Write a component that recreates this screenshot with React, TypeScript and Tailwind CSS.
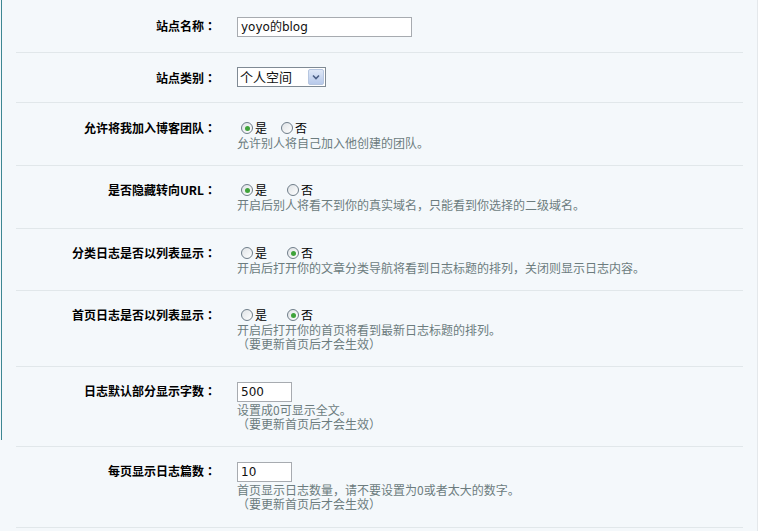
import type { ReactNode } from 'react';

const cjk = "font-['Noto_Sans_CJK_SC','Noto_Sans',sans-serif]";

type Option = { label: string; checked: boolean };

const Radio = ({ checked }: { checked: boolean }) => (
  <span className="relative inline-flex h-[12px] w-[12px] shrink-0 items-center justify-center rounded-full border border-[#6f7d89] bg-gradient-to-br from-[#dfe3e6] to-white">
    {checked && <span className="h-[5px] w-[5px] rounded-full bg-[#3fa33a]" />}
  </span>
);

const RadioGroup = ({ options, gap }: { options: Option[]; gap: string }) => (
  <div className={`flex h-[16px] items-center pl-[4px] ${gap}`}>
    {options.map((o) => (
      <label key={o.label} className="flex items-center gap-[2px] text-[12px] leading-[16px] text-black">
        <Radio checked={o.checked} />
        <span>{o.label}</span>
      </label>
    ))}
  </div>
);

const Hint = ({ children }: { children: ReactNode }) => (
  <p className="text-[12px] leading-[14px] text-[#6c7c7e]">{children}</p>
);

const TextBox = ({ value, width }: { value: string; width: string }) => (
  <div
    className={`flex h-[20px] ${width} items-center border border-[#a7abb0] bg-white pl-[3px] text-[12px] text-[#111] font-['DejaVu_Sans','Noto_Sans_CJK_SC',sans-serif]`}
  >
    {value}
  </div>
);

const Row = ({
  label,
  labelLeading,
  height,
  pt,
  children,
}: {
  label: string;
  labelLeading: string;
  height: string;
  pt: string;
  children: ReactNode;
}) => (
  <div className={`flex ${height} ${pt} border-b border-[#e1e7ea]`}>
    <div className={`w-[200px] shrink-0 text-right text-[12px] font-bold text-black ${labelLeading}`}>
      {label}
      {/* the TC face centres the full-width colon in its cell */}
      <span className="font-['Noto_Sans_CJK_TC',sans-serif]">：</span>
    </div>
    <div className="pl-[21px]">{children}</div>
  </div>
);

const yesNo = (yes: boolean): Option[] => [
  { label: '是', checked: yes },
  { label: '否', checked: !yes },
];

export default function App() {
  return (
    <div className={`flex h-[531px] w-[758px] overflow-hidden border-r border-[#e4e8eb] bg-[#f4f8fb] ${cjk}`}>
      {/* frame edge on the left */}
      <div className="w-[16px] shrink-0">
        <div className="ml-px h-[440px] w-px bg-[#3d8793]" />
      </div>

      <div className="w-[727px] shrink-0">
        <Row label="站点名称" labelLeading="leading-[18px]" height="h-[53px]" pt="pt-[17px]">
          <TextBox value="yoyo的blog" width="w-[175px]" />
        </Row>

        <Row label="站点类别" labelLeading="leading-[22px]" height="h-[50px]" pt="pt-[14px]">
          <div className="flex h-[20px] w-[89px] items-stretch border border-[#7f8a94] bg-white">
            <span className="flex-1 pl-[2px] text-[13px] leading-[18px] text-[#111]">个人空间</span>
            <span className="m-px flex w-[16px] items-center justify-center rounded-[2px] border border-[#b6c6e0] bg-gradient-to-b from-[#dfe8f7] to-[#b7c9ea]">
              <svg width="8" height="6" viewBox="0 0 8 6">
                <path d="M1 1.5 L4 4.5 L7 1.5" fill="none" stroke="#4b5f85" strokeWidth="1.6" />
              </svg>
            </span>
          </div>
        </Row>

        <Row label="允许将我加入博客团队" labelLeading="leading-[16px]" height="h-[63px]" pt="pt-[17px]">
          <RadioGroup options={yesNo(true)} gap="gap-[14px]" />
          <Hint>允许别人将自己加入他创建的团队。</Hint>
        </Row>

        <Row label="是否隐藏转向URL" labelLeading="leading-[16px]" height="h-[63px]" pt="pt-[16px]">
          <RadioGroup options={yesNo(true)} gap="gap-[20px]" />
          <Hint>开启后别人将看不到你的真实域名，只能看到你选择的二级域名。</Hint>
        </Row>

        <Row label="分类日志是否以列表显示" labelLeading="leading-[16px]" height="h-[62px]" pt="pt-[16px]">
          <RadioGroup options={yesNo(false)} gap="gap-[20px]" />
          <Hint>开启后打开你的文章分类导航将看到日志标题的排列，关闭则显示日志内容。</Hint>
        </Row>

        <Row label="首页日志是否以列表显示" labelLeading="leading-[16px]" height="h-[76px]" pt="pt-[16px]">
          <RadioGroup options={yesNo(false)} gap="gap-[20px]" />
          <Hint>开启后打开你的首页将看到最新日志标题的排列。</Hint>
          <Hint>（要更新首页后才会生效）</Hint>
        </Row>

        <Row label="日志默认部分显示字数" labelLeading="leading-[18px]" height="h-[80px]" pt="pt-[15px]">
          <TextBox value="500" width="w-[55px]" />
          <div className="mt-[1px]">
            <Hint>设置成0可显示全文。</Hint>
            <Hint>（要更新首页后才会生效）</Hint>
          </div>
        </Row>

        <Row label="每页显示日志篇数" labelLeading="leading-[18px]" height="h-[81px]" pt="pt-[15px]">
          <TextBox value="10" width="w-[55px]" />
          <div className="mt-[1px]">
            <Hint>首页显示日志数量，请不要设置为0或者太大的数字。</Hint>
            <Hint>（要更新首页后才会生效）</Hint>
          </div>
        </Row>
      </div>
    </div>
  );
}
